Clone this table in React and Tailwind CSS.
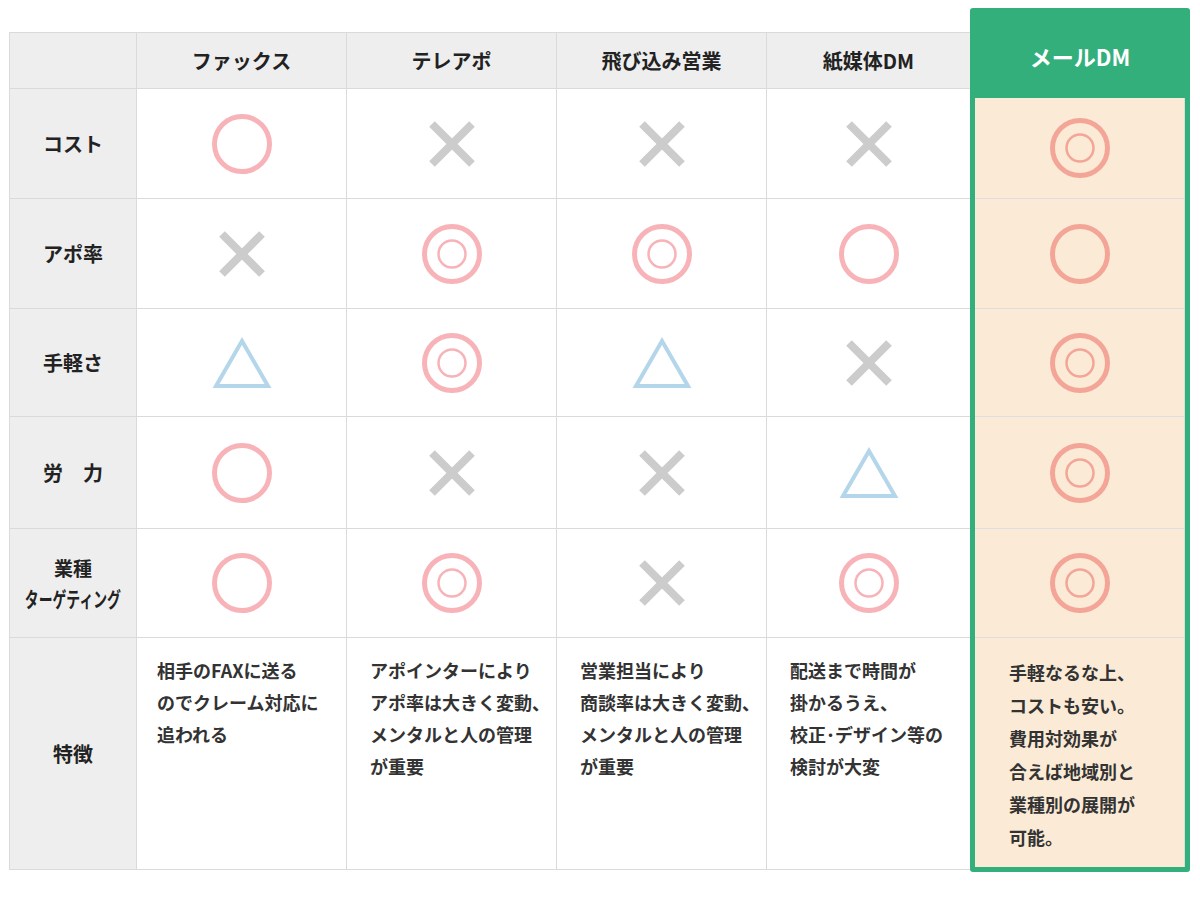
import React from 'react';

const columns = ['ファックス', 'テレアポ', '飛び込み営業', '紙媒体DM'];

// o = 丸, w = 二重丸, x = バツ, t = 三角
const rows = [
  { label: 'コスト', marks: ['o', 'x', 'x', 'x'], mail: 'w' },
  { label: 'アポ率', marks: ['x', 'w', 'w', 'o'], mail: 'o' },
  { label: '手軽さ', marks: ['t', 'w', 't', 'x'], mail: 'w' },
  { label: '労　力', marks: ['o', 'x', 'x', 't'], mail: 'w' },
  { label: 'targeting', marks: ['o', 'w', 'x', 'w'], mail: 'w' },
];

const features = [
  ['相手のFAXに送る', 'のでクレーム対応に', '追われる'],
  ['アポインターにより', 'アポ率は大きく変動、', 'メンタルと人の管理', 'が重要'],
  ['営業担当により', '商談率は大きく変動、', 'メンタルと人の管理', 'が重要'],
  ['配送まで時間が', '掛かるうえ、', '校正･デザイン等の', '検討が大変'],
];

const mailFeature = ['手軽なるな上、', 'コストも安い。', '費用対効果が', '合えば地域別と', '業種別の展開が', '可能。'];

const mailRowHeights = ['h-[101px]', 'h-[110px]', 'h-[108px]', 'h-[112px]', 'h-[109px]'];

function Mark({ type, mail }) {
  const pink = mail ? '#f3a598' : '#f7b3b8';
  if (type === 'o' || type === 'w') {
    return (
      <svg width="62" height="62" viewBox="0 0 62 62">
        <circle cx="31" cy="31" r="27.5" fill="none" stroke={pink} strokeWidth="5" />
        {type === 'w' && <circle cx="31" cy="31" r="13.5" fill="none" stroke={pink} strokeWidth="2.5" />}
      </svg>
    );
  }
  if (type === 'x') {
    return (
      <svg width="46" height="46" viewBox="0 0 46 46">
        <line x1="3" y1="3" x2="43" y2="43" stroke="#cccccc" strokeWidth="8" />
        <line x1="43" y1="3" x2="3" y2="43" stroke="#cccccc" strokeWidth="8" />
      </svg>
    );
  }
  return (
    <svg width="60" height="54" viewBox="0 0 60 54">
      <polygon points="30,5 56,50 4,50" fill="none" stroke="#b4d6eb" strokeWidth="4" />
    </svg>
  );
}

function RowLabel({ label }) {
  if (label === 'targeting') {
    return (
      <div className="flex flex-col items-center leading-[31px]">
        <span className="text-[19px] font-bold">業種</span>
        <span className="inline-block text-[21px] font-bold scale-x-[0.66] whitespace-nowrap">ターゲティング</span>
      </div>
    );
  }
  return <span className="text-[20px] font-bold whitespace-pre">{label}</span>;
}

export default function App() {
  return (
    <div className="w-[1200px] h-[900px] bg-white flex items-start pl-[9px] text-[#222] font-['Noto_Sans_CJK_JP',sans-serif]">
      {/* comparison table */}
      <div className="mt-[32px] grid grid-cols-[126px_209px_209px_209px_203px] grid-rows-[55px_109px_109px_107px_111px_108px_231px] gap-px bg-[#dadada] pl-px pt-px pb-px">
        <div className="bg-[#eeeeee]" />
        {columns.map((c) => (
          <div key={c} className="bg-[#eeeeee] flex items-center justify-center text-[20px] font-bold">
            {c}
          </div>
        ))}

        {rows.map((r) => (
          <React.Fragment key={r.label}>
            <div className="bg-[#eeeeee] flex items-center justify-center">
              <RowLabel label={r.label} />
            </div>
            {r.marks.map((m, i) => (
              <div key={i} className="bg-white flex items-center justify-center">
                <Mark type={m} />
              </div>
            ))}
          </React.Fragment>
        ))}

        <div className="bg-[#eeeeee] flex items-center justify-center text-[20px] font-bold">特徴</div>
        {features.map((lines, i) => (
          <div key={i} className={`bg-white pt-[16px] text-[18px] font-semibold leading-[32px] text-[#333] whitespace-nowrap ${i === 0 ? 'pl-[20px]' : 'pl-[23px]'}`}>
            {lines.map((l) => (
              <div key={l}>{l}</div>
            ))}
          </div>
        ))}
      </div>

      {/* highlighted mail DM column */}
      <div className="mt-[8px] w-[220px] bg-[#33af7c] px-[5px] pb-[5px] rounded-[3px]">
        <div className="h-[90px] flex items-center justify-center pt-[6px] text-white text-[22px] font-bold">
          メールDM
        </div>
        <div className="bg-[#fbebd6] border-r border-[#dcdcdc]">
          {rows.map((r, i) => (
            <div key={r.label} className={`${mailRowHeights[i]} border-b border-[#dedede] flex items-center justify-center`}>
              <Mark type={r.mail} mail />
            </div>
          ))}
          <div className="h-[229px] pl-[34px] pt-[18px] text-[18px] font-semibold leading-[33px] text-[#333] whitespace-nowrap">
            {mailFeature.map((l) => (
              <div key={l}>{l}</div>
            ))}
          </div>
        </div>
      </div>
    </div>
  );
}
